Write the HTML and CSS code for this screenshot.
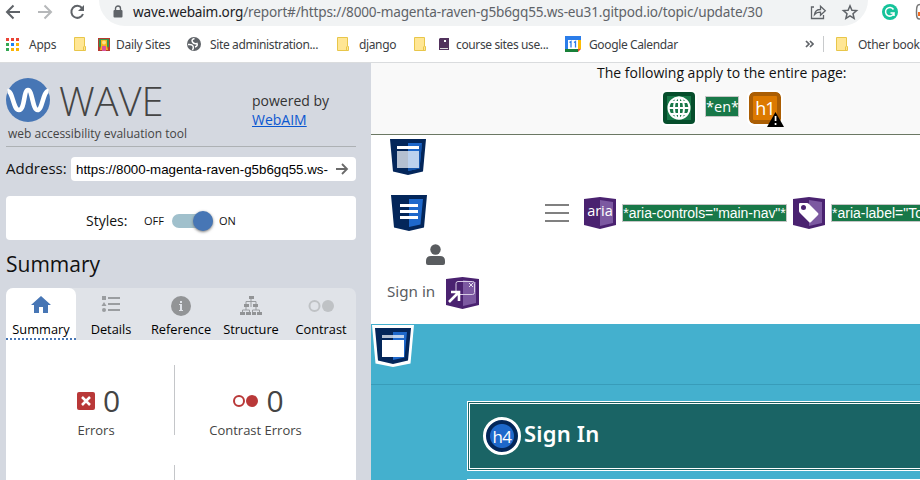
FILE: index.html
```html
<!DOCTYPE html>
<html lang="en">
<head>
<meta charset="utf-8">
<title>WAVE Report</title>
<link rel="stylesheet" href="styles.css">
</head>
<body>
<header class="browser">
  <div class="toolbar">
    <svg class="nav-icons" width="90" height="26" viewBox="0 0 90 26" fill="none" stroke="#5f6368" stroke-width="2">
      <path d="M20 12H7M13.500 5.500 7 12l6.500 6.500"/>
      <path stroke="#b6b8ba" d="M38 12h13M44.500 5.500 51 12l-6.500 6.500"/>
      <path d="M82 8A6 6 0 1 0 83 14"/><path d="M84 5v6h-6z" fill="#5f6368" stroke="none"/>
    </svg>
    <div class="omnibox">
      <svg class="lock" width="10" height="14" viewBox="0 0 10 14"><path d="M2.500 6V3.500a2.500 2.500 0 0 1 5 0V6" fill="none" stroke="#5f6368" stroke-width="1.400"/><rect x=".5" y="5" width="9" height="7.500" rx="1" fill="#5f6368"/></svg>
      <span class="url"><b>wave.webaim.org</b>/report#/https://8000-magenta-raven-g5b6gq55.ws-eu31.gitpod.io/topic/update/30</span>
      <svg class="omni-actions" width="56" height="26" viewBox="0 0 56 26" fill="none" stroke="#5f6368" stroke-width="1.300">
        <path d="M4 7H1.500v11.500h12V15M4.500 14.500c.5-3.500 2.500-5 6-5V6.300l4.800 4.500-4.800 4.400v-3c-3 0-4.800.8-6 2.300z"/>
        <path stroke-width="1.500" d="m40 5.800 1.900 4.400 4.700.4-3.600 3.100 1.100 4.600-4.100-2.500-4.100 2.500 1.100-4.600-3.600-3.100 4.700-.4z"/>
      </svg>
    </div>
    <svg class="extensions" width="52" height="26" viewBox="0 0 52 26"><circle cx="22" cy="12" r="8" fill="#15c39a"/><path d="M25.500 9.500A4.300 4.300 0 1 0 26 13h-3.500M26 13v3" fill="none" stroke="#fff" stroke-width="1.500"/><path d="M52 4.500c-3 0-3.500 2-3.500 7.500s.5 7 3.500 7" fill="#fff" stroke="#777" stroke-width="1.500"/><rect x="50" y="12" width="2" height="4" fill="#f26b21"/></svg>
  </div>
  <nav class="bookmarks">
    <svg class="apps" width="13" height="13" viewBox="0 0 13 13"><g fill="#ea4335"><path d="M0 0h3v3H0zM5 0h3v3H5zM10 0h3v3h-3z"/></g><path fill="#34a853" d="M0 5h3v3H0zM0 10h3v3H0z"/><path fill="#1a82f7" d="M5 5h3v3H5z"/><path fill="#fbb405" d="M10 5h3v3h-3zM5 10h3v3H5zM10 10h3v3h-3z"/></svg>
    <span class="bm bm-apps">Apps</span>
    <svg class="folder f1" width="12" height="14" viewBox="0 0 12 14"><path d="M.5.500h10v9h1v4H.5z" fill="#ffe694" stroke="#e8c64a"/><path d="M9.500 13V9.500" stroke="#e8c64a"/></svg>
    <svg class="daily" width="12" height="13" viewBox="0 0 12 13"><path fill="#b63a2e" d="M0 0h12v13H0z"/><path fill="#37944b" d="M1 1h10v8H1z"/><path fill="#f4b61c" d="M3 2h6v6l1 4H2l1-4z"/><circle cx="6" cy="4.500" r="2" fill="#ffe080"/><path fill="#da529a" d="M4 8h4v5H4z"/></svg>
    <span class="bm bm-daily">Daily Sites</span>
    <svg class="site" width="14" height="14" viewBox="0 0 14 14"><circle cx="7" cy="7" r="7" fill="#5f6368"/><path d="M7.500 1.500Q4 2.500 5.500 5T10 6.500q1 2.500-2 3.500M1 7.500q4-.5 5 1.500t-.5 4" fill="none" stroke="#fff" stroke-width="1.500"/></svg>
    <span class="bm bm-site">Site administration...</span>
    <svg class="folder f2" width="12" height="14" viewBox="0 0 12 14"><path d="M.5.500h10v9h1v4H.5z" fill="#ffe694" stroke="#e8c64a"/><path d="M9.500 13V9.500" stroke="#e8c64a"/></svg>
    <span class="bm bm-django">django</span>
    <svg class="folder f3" width="12" height="14" viewBox="0 0 12 14"><path d="M.5.500h10v9h1v4H.5z" fill="#ffe694" stroke="#e8c64a"/><path d="M9.500 13V9.500" stroke="#e8c64a"/></svg>
    <svg class="course" width="10" height="12" viewBox="0 0 10 12"><path d="M1 0h9v12H0V1z" fill="#52325d"/><path d="M1 10h8v1H1z" fill="#ddd"/><path d="M5 2h2v2H5z" fill="#fff"/></svg>
    <span class="bm bm-course">course sites use...</span>
    <svg class="calendar" width="16" height="16" viewBox="0 0 16 16"><path fill="#2b7de9" d="M0 0h16v4H0zM0 0h3v13H0z"/><path fill="#fbbc04" d="M13 4h3v9h-3z"/><path fill="#188038" d="M0 13h13v3H0z"/><path fill="#ea4335" d="M13 13h3l-3 3z"/><path fill="#fff" d="M3 4h10v9H3z"/><path d="m4.500 6.500 1.500-1v6m3-5 1.500-1v6" stroke="#2b7de9" fill="none" stroke-width="1.300"/></svg>
    <span class="bm bm-calendar">Google Calendar</span>
    <svg class="more" width="9" height="8" viewBox="0 0 9 8" fill="none" stroke="#5f6368" stroke-width="1.700"><path d="m1 1 3 3-3 3M5 1l3 3-3 3"/></svg>
    <i class="bm-line"></i>
    <svg class="folder f4" width="12" height="14" viewBox="0 0 12 14"><path d="M.5.500h10v9h1v4H.5z" fill="#ffe694" stroke="#e8c64a"/><path d="M9.500 13V9.500" stroke="#e8c64a"/></svg>
    <span class="bm bm-other">Other bookmarks</span>
  </nav>
</header>
<div class="content">
  <aside class="sidebar">
    <div class="brand">
      <div class="logo">
        <div class="wordmark">
          <svg width="44" height="44" viewBox="0 0 44 44"><circle cx="22" cy="22" r="22" fill="#4776b5"/><path d="M1.500 13C7 13 7 32 13 32s4.500-20 9-20 4.500 20 9.500 20S37 13 42.500 13" fill="none" stroke="#fff" stroke-width="4.600"/></svg>
          <span>WAVE</span>
        </div>
        <div class="tagline">web accessibility evaluation tool</div>
      </div>
      <div class="powered">powered by<br><a>WebAIM</a></div>
    </div>
    <div class="address">
      <span class="address-label">Address:</span>
      <div class="address-field"><span>https://8000-magenta-raven-g5b6gq55.ws-</span><svg width="13" height="12" viewBox="0 0 13 12" fill="none" stroke="#6a6a6a" stroke-width="1.800"><path d="M0 6h11M6 1l5 5-5 5"/></svg></div>
    </div>
    <div class="styles-box"><span class="styles-label">Styles:</span><span class="small off">OFF</span><span class="switch"><i></i></span><span class="small on">ON</span></div>
    <h2>Summary</h2>
    <div class="tabs">
      <div class="tab active"><svg width="20" height="18" viewBox="0 0 20 18"><path fill="#4776b5" d="m10 0 10 9h-3v8h-5v-6H8v6H3V9H0z"/></svg><span class="t1">Summary</span></div>
      <div class="tab"><svg width="20" height="18" viewBox="0 0 20 18"><path d="M1 0h4v4H1zM3 6l2.500 4h-5z" fill="#9a9da0"/><circle cx="3" cy="14" r="2" fill="#9a9da0"/><path d="M7 2h12M7 8h12M7 14h12" stroke="#9a9da0" stroke-width="2"/></svg><span class="t2">Details</span></div>
      <div class="tab"><svg width="20" height="20" viewBox="0 0 20 20"><circle cx="10" cy="10" r="10" fill="#929496"/><path fill="#e0e3e8" d="M9 5h2v2H9zM8 8h3v6h1v1H8v-1h1V9H8z"/></svg><span class="t3">Reference</span></div>
      <div class="tab"><svg width="22" height="19" viewBox="0 0 22 19"><path d="M11 3v8M6 8V5.500h10V8M2.500 17v-3h7v3M12.500 17v-3h7v3M6 10v4M16 10v4" fill="none" stroke="#9a9da0"/><path fill="#929496" d="M9 0h5v3H9zM4 8h5v3H4zM13 8h5v3h-5zM0 16h5v3H0zM6 16h5v3H6zM12 16h4v3h-4zM17 16h5v3h-5z"/></svg><span class="t4">Structure</span></div>
      <div class="tab"><svg width="26" height="20" viewBox="0 0 26 20"><circle cx="6.500" cy="10" r="5" fill="none" stroke="#bfc2c5" stroke-width="2"/><circle cx="20" cy="10" r="6" fill="#bfc2c5"/></svg><span class="t5">Contrast</span></div>
    </div>
    <div class="panel">
      <div class="stat">
        <div class="stat-row"><svg width="18" height="18" viewBox="0 0 18 18"><rect width="18" height="18" rx="2" fill="#b93838"/><path d="m5 5 8 8m0-8-8 8" stroke="#fff" stroke-width="2.500"/></svg><span>0</span></div>
        <div class="stat-label errors">Errors</div>
      </div>
      <div class="stat divided">
        <div class="stat-row"><svg width="26" height="18" viewBox="0 0 26 18"><circle cx="7" cy="9" r="5" fill="none" stroke="#b93838" stroke-width="2"/><circle cx="20" cy="9" r="6" fill="#b93838"/></svg><span>0</span></div>
        <div class="stat-label contrast">Contrast Errors</div>
      </div>
      <div class="stat next"></div><div class="stat next divided"></div>
    </div>
  </aside>
  <main class="page">
    <section class="page-wide">
      <p>The following apply to the entire page:</p>
      <div class="wide-icons">
        <svg width="36" height="36" viewBox="0 0 36 36"><rect width="36" height="36" rx="6" fill="#fff"/><rect x="2" y="2" width="32" height="32" rx="4" fill="#064e2c"/><path fill="#187848" d="M6 6h24v24H6z"/><g fill="none" stroke="#fff" stroke-width="2"><circle cx="18" cy="18" r="10.500"/><ellipse cx="18" cy="18" rx="5" ry="10.500"/><path d="M18 7.500v21M8 18h20M10 12h16M10 24h16"/></g></svg>
        <span class="badge lang">*en*</span>
        <div class="h1-icon"><span>h1</span><svg width="17" height="15" viewBox="0 0 17 15"><path d="M8.500 0 17 15H0z"/><path fill="#fff" d="M7.700 4h1.700v5H7.700zM7.700 11h1.700v2H7.700z"/></svg></div>
      </div>
    </section>
    <section class="site-head">
      <svg class="header-shield" width="36" height="36" viewBox="0 0 36 36"><path fill="#03265a" d="M0 0h36l-3 32.500L18 36 3 32.500z"/><path fill="#1e68cb" d="M18 4h14l-2.500 25.500L18 32z"/><path fill="#1555ac" d="m29 8 3-4-2.500 25.500L18 32v-3l11-3z"/><path fill="#fff" d="M7 7h22v3H7z"/><path fill="#b4c0d1" d="M7 12h11v17H7z"/><path fill="#bbd1ee" d="M18 12h11v17H18z"/></svg>
      <div class="nav-row">
        <svg class="nav-shield" width="36" height="36" viewBox="0 0 36 36"><path fill="#03265a" d="M0 0h36l-3 32.500L18 36 3 32.500z"/><path fill="#1e68cb" d="M18 4h14l-2.500 25.500L18 32z"/><path fill="#fff" d="M9 9h18v3H9zM9 15h18v3H9zM9 21h18v3H9z"/></svg>
        <svg class="burger" width="24" height="18" viewBox="0 0 24 18"><path d="M0 1h24M0 9h24M0 17h24" stroke="#808080" stroke-width="2"/></svg>
        <div class="aria-icon"><svg width="32" height="32" viewBox="0 0 32 32"><path fill="#4a2270" d="M0 2 16 0l16 2v26l-16 4-16-4z"/><path fill="#7c59a1" d="m16 3 13 2v21l-13 3z"/></svg><span>aria</span></div>
        <span class="badge controls">*aria-controls="main-nav"*</span>
        <svg class="label-icon" width="32" height="32" viewBox="0 0 32 32"><path fill="#4a2270" d="M0 2 16 0l16 2v26l-16 4-16-4z"/><path fill="#7c59a1" d="m16 3 13 2v21l-13 3z"/><path fill="#fff" fill-rule="evenodd" d="M7 6h7q1 0 2 1l9 9q1 1 0 2l-7 7q-1 1-2 0L7 16q-1-1-1-2V7q0-1 1-1zM10.500 8a2.500 2.500 0 1 0 0 5 2.500 2.500 0 0 0 0-5z"/></svg>
        <span class="badge label">*aria-label="Toggle navigation"*</span>
      </div>
      <svg class="user" width="19" height="22" viewBox="0 0 19 22"><circle cx="9.500" cy="5.500" r="5.200" fill="#595c5f"/><path d="M0 19v-2q0-5 5-5h9q5 0 5 5v2q0 2-2 2H2q-2 0-2-2z" fill="#595c5f"/></svg>
      <div class="signin-row"><span>Sign in</span><svg width="33" height="32" viewBox="0 0 33 32"><path fill="#4a2270" d="M0 2 16.500 0 33 2v26l-16.500 4L0 28z"/><path fill="#7c59a1" d="m17 3 13 2v21l-13 3z"/><rect x="10" y="4.500" width="18.500" height="13" rx="2" fill="none" stroke="#d8cce5"/><path d="m23 6 4 4m0-4-4 4" stroke="#fff" stroke-width=".8"/><path d="M3 25 12 16M5 15h8v9" fill="none" stroke="#fff" stroke-width="2.600"/></svg></div>
    </section>
    <section class="hero">
      <div class="hero-head"><svg width="42" height="42" viewBox="0 0 42 42"><path fill="#fff" d="M0 0h42l-3.500 38.500L21 42 3.500 38.500z"/><path fill="#03265a" d="M3 3h36l-3 32.500L21 39 6 35.500z"/><path fill="#1e68cb" d="M21 7h14l-2.500 25.500L21 35z"/><path fill="#b4c0d1" d="M10 10h11v3H10z"/><path fill="#bbd1ee" d="M21 10h11v3H21z"/><path fill="#fff" d="M10 15h22v17H10z"/></svg></div>
      <div class="card"><span class="h4-icon">h4</span><h4>Sign In</h4></div>
      <div class="next-card"></div>
    </section>
  </main>
</div>
</body>
</html>
```

FILE: styles.css
```css
* { box-sizing: border-box; }
body { margin: 0; width: 920px; height: 480px; overflow: hidden; background: #fff; font-family: "Open Sans", "Noto Sans", sans-serif; color: #111; }
svg { display: block; flex: none; }
span { white-space: nowrap; }
.browser { height: 63px; border-bottom: 1px solid #dadcde; font-family: "Noto Sans", sans-serif; }
.toolbar { display: flex; height: 26px; overflow: hidden; }
.omnibox { display: flex; width: 769px; height: 52px; margin-top: -26px; margin-left: 9px; padding: 26px 0 0 14px; border-radius: 26px; background: #f1f3f4; }
.lock { margin-top: 5px; }
.url { flex: none; width: 630px; margin-left: 10px; font-size: 13.6px; letter-spacing: -.175px; line-height: 24px; color: #5f6368; }
.url b { font-weight: 400; color: #202124; }
.omni-actions { margin-left: 47px; }
.bookmarks { display: flex; align-items: center; height: 36px; padding-left: 6px; font-size: 12px; letter-spacing: -.37px; color: #3c4043; overflow: hidden; }
.bm { flex: none; }
.bm-apps { margin-left: 10px; width: 44px; letter-spacing: -.25px; }
.folder { margin-left: 1px; }
.daily { margin-left: 12px; }
.bm-daily { margin-left: 6px; width: 71px; letter-spacing: -.3px; }
.site { margin-left: 0; }
.bm-site { margin-left: 9px; width: 126px; }
.bm-django { margin-left: 10px; width: 54px; }
.course { margin-left: 13px; }
.bm-course { margin-left: 7px; width: 109px; }
.bm-calendar { margin-left: 8px; width: 216px; }
.bm-line { flex: none; width: 1px; height: 16px; margin: 0 11px 0 9px; background: #c8cacc; }
.bm-other { margin-left: 10px; letter-spacing: -.25px; }
.content { display: flex; height: 417px; }
.sidebar { flex: none; width: 371px; padding: 0 15px 0 6px; background: #d4d8e0; }
.brand { display: flex; height: 84px; padding-top: 15px; border-bottom: 1px solid #adb1b4; }
.logo { width: 246px; }
.wordmark { display: flex; height: 44px; }
.wordmark span { margin-left: 9px; font-size: 40px; line-height: 46px; font-weight: 300; letter-spacing: -.1px; color: #444; }
.tagline { margin-left: 2px; font-size: 12px; line-height: 23px; color: #444; white-space: nowrap; }
.powered { padding-top: 13px; font-size: 14px; line-height: 19px; color: #333; white-space: nowrap; }
.powered a { color: #0b57d0; text-decoration: underline; }
.address { display: flex; height: 24px; margin-top: 10px; }
.address-label { width: 65px; font-size: 15px; line-height: 23px; }
.address-field { display: flex; align-items: center; justify-content: space-between; width: 285px; padding: 0 7px 0 5px; border-radius: 4px; background: #fff; font: 13.333px "Liberation Sans", sans-serif; color: #000; }
.styles-box { display: flex; align-items: center; height: 44px; margin-top: 15px; padding: 5px 0 0 80px; border-radius: 4px; background: #fff; font-size: 14px; }
.styles-label { width: 58px; }
.small { font-size: 11px; }
.off { width: 28px; }
.switch { display: flex; align-items: center; justify-content: flex-end; width: 41px; height: 14px; border-radius: 7px; background: #a0c0cc; }
.switch i { width: 20px; height: 20px; border-radius: 50%; background: #4776b5; box-shadow: 0 1px 3px #777; }
.on { margin-left: 6px; }
h2 { margin: 0; height: 48px; font-size: 21px; line-height: 48px; font-weight: 400; }
.tabs { display: flex; height: 52px; border-radius: 7px 7px 0 0; background: #e0e3e8; font-size: 12.8px; color: #000; }
.tab { display: flex; flex-direction: column; align-items: center; width: 70px; padding-top: 8px; }
.tab span { margin-top: auto; line-height: 21px; }
.tab.active { border-radius: 7px 7px 0 0; background: #fff; border-bottom: 2px dotted #4776b5; }
.tab.active span { line-height: 18px; }
.panel { display: grid; grid-template-columns: 168px 182px; grid-template-rows: 70px 100px; row-gap: 30px; height: 141px; padding-top: 25px; background: #fff; overflow: hidden; }
.stat { padding: 19px 0 0 12px; color: #444; }
.stat.divided { padding: 19px 20px 0 0; border-left: 1px solid #c4c6c9; }
.stat-row { display: flex; align-items: center; justify-content: center; gap: 8px; height: 34px; padding-left: 5px; font-size: 30px; line-height: 34px; }
.stat-label { font-size: 13px; line-height: 25px; text-align: center; }
.page { width: 549px; overflow: hidden; background: #fff; }
.page-wide { height: 72px; border-bottom: 1px solid #6b7864; background: #f9f9f9; }
.page-wide p { margin: 0 0 0 226px; font-size: 14px; line-height: 20px; }
.wide-icons { display: flex; padding: 7px 0 0 290px; }
.badge { flex: none; height: 18px; border: 1px solid #c6c6c6; background: #187848; color: #fff; text-align: center; }
.lang { width: 34px; height: 21px; margin: 6px 0 0 8px; font-size: 14.5px; line-height: 19px; }
.h1-icon { position: relative; width: 32px; height: 32px; margin: 2px 0 0 10px; border: 4px solid #ab5e04; border-radius: 5px; outline: 2px solid #fff; background: #dc7900; color: #fff; font-size: 18px; letter-spacing: -1px; line-height: 25px; text-align: center; }
.h1-icon svg { position: absolute; left: 14px; top: 16px; }
.site-head { height: 189px; padding-top: 4px; }
.header-shield { margin-left: 19px; }
.nav-row { display: flex; align-items: center; height: 36px; margin: 20px 0 0 20px; }
.burger { margin-left: 118px; }
.aria-icon { position: relative; width: 32px; height: 32px; margin-left: 15px; }
.aria-icon span { position: absolute; left: 0; top: 4px; width: 32px; text-align: center; color: #fff; font-size: 14.5px; line-height: 20px; }
.badge.controls, .badge.label { font: 14px/16px "Liberation Sans", sans-serif; }
.controls { width: 165px; margin-left: 6px; letter-spacing: -.05px; }
.label-icon { margin-left: 6px; }
.label { margin-left: 6px; text-align: left; }
.user { margin: 13px 0 0 55px; }
.signin-row { display: flex; align-items: center; margin: 11px 0 0 16px; color: #595c5f; font: 15.2px "Noto Sans", sans-serif; }
.signin-row span { width: 59px; margin-top: -5px; }
.hero { height: 160px; background: #44b0ce; }
.hero-head { height: 61px; padding: 1px 0 0 1px; border-bottom: 1px solid #389cb9; }
.card { display: flex; align-items: center; width: 480px; height: 70px; margin: 16px 0 0 96px; padding-left: 13px; border: 3px double #fff; background: #1a6465; color: #fff; font-family: "Noto Sans", sans-serif; }
.h4-icon { width: 38px; height: 38px; border: 3px solid #fff; border-radius: 50%; background: radial-gradient(circle, #1e68cb 11.500px, #03265a 12.500px); font: 400 17px/33px "Open Sans", sans-serif; letter-spacing: -.5px; text-align: center; }
h4 { margin: 0 0 6px 3px; font-size: 22px; font-weight: 600; letter-spacing: .2px; line-height: 30px; }
.next-card { height: 3px; margin: 8px 0 0 96px; background: #fff; }
```
